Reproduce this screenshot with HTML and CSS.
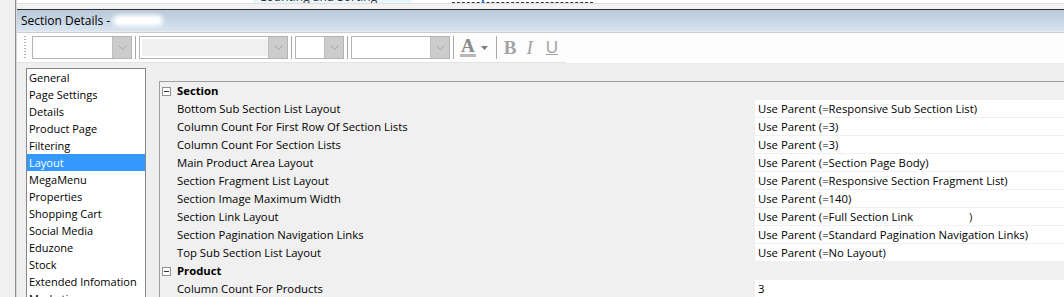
FILE: index.html
```html
<!DOCTYPE html>
<html>
<head>
  <title>Section Details</title>
  <link rel="stylesheet" href="styles.css">
</head>
<body>
  <div class="gutter"></div>
  <div class="main">
    <div class="behind">
      <div class="behind-tab"><span>Counting and Sorting</span></div>
      <div class="behind-dash"><span class="caret"></span></div>
    </div>
    <div class="behind-gap"></div>

    <div class="titlebar">
      <span>Section Details - </span><span class="redact title-redact"></span>
    </div>

    <div class="toolbar">
      <div class="strip">
        <span class="grip"></span>
        <div class="combo w100"><span class="drop"><svg width="9" height="5" viewBox="0 0 9 5"><polyline points="0.5,0.5 4.5,4.5 8.5,0.5" fill="none" stroke="#a6a6a6"/></svg></span></div>
        <span class="sep"></span>
        <div class="combo w149 disabled"><span class="drop"><svg width="9" height="5" viewBox="0 0 9 5"><polyline points="0.5,0.5 4.5,4.5 8.5,0.5" fill="none" stroke="#a6a6a6"/></svg></span></div>
        <span class="sep"></span>
        <div class="combo w49"><span class="drop"><svg width="9" height="5" viewBox="0 0 9 5"><polyline points="0.5,0.5 4.5,4.5 8.5,0.5" fill="none" stroke="#a6a6a6"/></svg></span></div>
        <span class="sep"></span>
        <div class="combo w99"><span class="drop"><svg width="9" height="5" viewBox="0 0 9 5"><polyline points="0.5,0.5 4.5,4.5 8.5,0.5" fill="none" stroke="#a6a6a6"/></svg></span></div>
        <span class="sep"></span>
        <span class="tool font-colour">A</span>
        <svg class="tri" width="7" height="4" viewBox="0 0 7 4"><polygon points="0,0 7,0 3.5,4" fill="#7a7a7a"/></svg>
        <span class="sep"></span>
        <span class="tool bold">B</span>
        <span class="tool italic">I</span>
        <span class="tool under">U</span>
      </div>
    </div>

    <div class="content">
      <ul class="pages">
        <li>General</li>
        <li>Page Settings</li>
        <li>Details</li>
        <li>Product Page</li>
        <li>Filtering</li>
        <li class="selected">Layout</li>
        <li>MegaMenu</li>
        <li>Properties</li>
        <li>Shopping Cart</li>
        <li>Social Media</li>
        <li>Eduzone</li>
        <li>Stock</li>
        <li>Extended Infomation</li>
        <li>Marketing</li>
      </ul>

      <div class="grid">
        <div class="cat"><span class="margin"><span class="toggle"></span></span><span class="cat-name">Section</span></div>
        <div class="row"><span class="margin"></span><span class="label">Bottom Sub Section List Layout</span><span class="value">Use Parent (=Responsive Sub Section List)</span></div>
        <div class="row"><span class="margin"></span><span class="label">Column Count For First Row Of Section Lists</span><span class="value">Use Parent (=3)</span></div>
        <div class="row"><span class="margin"></span><span class="label">Column Count For Section Lists</span><span class="value">Use Parent (=3)</span></div>
        <div class="row"><span class="margin"></span><span class="label">Main Product Area Layout</span><span class="value">Use Parent (=Section Page Body)</span></div>
        <div class="row"><span class="margin"></span><span class="label">Section Fragment List Layout</span><span class="value">Use Parent (=Responsive Section Fragment List)</span></div>
        <div class="row"><span class="margin"></span><span class="label">Section Image Maximum Width</span><span class="value">Use Parent (=140)</span></div>
        <div class="row"><span class="margin"></span><span class="label">Section Link Layout</span><span class="value">Use Parent (=Full Section Link<span class="redact value-redact"></span>)</span></div>
        <div class="row"><span class="margin"></span><span class="label">Section Pagination Navigation Links</span><span class="value">Use Parent (=Standard Pagination Navigation Links)</span></div>
        <div class="row"><span class="margin"></span><span class="label">Top Sub Section List Layout</span><span class="value">Use Parent (=No Layout)</span></div>
        <div class="cat"><span class="margin"><span class="toggle"></span></span><span class="cat-name">Product</span></div>
        <div class="row"><span class="margin"></span><span class="label">Column Count For Products</span><span class="value">3</span></div>
      </div>
    </div>
  </div>
</body>
</html>
```

FILE: styles.css
```css
html, body {
  margin: 0;
  padding: 0;
  height: 297px;
  overflow: hidden;
}
body {
  display: flex;
  font-family: "Open Sans", sans-serif;
  font-size: 11px;
  color: #000;
  background-color: #efefef;
}
.gutter {
  width: 15px;
  flex-shrink: 0;
  background-color: #f0f0f0;
  border-right: 1px solid #8c8c8c;
  box-shadow: 1px 0 0 #d8d8d8;
}
.main {
  flex: 1;
  margin-left: 1px;
  display: flex;
  flex-direction: column;
  min-width: 0;
}

/* window behind, mostly hidden */
.behind {
  height: 3px;
  display: flex;
  background-color: #fff;
  border-bottom: 1px solid #dedede;
  overflow: hidden;
}
.behind-tab {
  margin-left: 236px;
  width: 159px;
  background-color: #e9f6fb;
  line-height: 14px;
  color: #333;
}
.behind-tab span {
  display: block;
  margin-top: -10px;
  padding-left: 6px;
  font-size: 12px;
}
.behind-dash {
  margin-left: 40px;
  width: 141px;
  height: 2px;
  border-bottom: 1px dashed #333;
}
.caret {
  display: inline-block;
  margin-left: 30px;
  width: 2px;
  height: 3px;
  background-color: #3a6fd8;
  vertical-align: top;
}
.behind-gap {
  height: 5px;
  background-color: #f2f2f2;
}

.titlebar {
  height: 21px;
  border-top: 1px solid #2e2e2e;
  border-bottom: 1px solid #e9ecef;
  box-shadow: 0 1px 0 #cdcdcd;
  margin-bottom: 1px;
  background: linear-gradient(#b9c9da, #d8e4f0);
  padding-left: 4px;
  display: flex;
  align-items: center;
  font-size: 12px;
  color: #000;
}
.redact {
  display: inline-block;
  background-color: #fff;
  border-radius: 6px;
  filter: blur(2px);
}
.title-redact {
  width: 50px;
  height: 11px;
  margin-left: 3px;
}

.toolbar {
  height: 30px;
  background-color: #fdfdfd;
}
.strip {
  width: 549px;
  height: 29px;
  display: flex;
  align-items: center;
  border-bottom: 1px solid #e2e2e2;
}
.grip {
  width: 2px;
  height: 23px;
  margin-left: 7px;
  margin-right: 6px;
  background-image: linear-gradient(#b0b0b0 50%, transparent 50%);
  background-size: 2px 3px;
}
.combo {
  height: 21px;
  border: 1px solid #b4b4b4;
  background-color: #fff;
  display: flex;
  justify-content: flex-end;
  box-sizing: content-box;
}
.combo.disabled {
  background-color: #f0f0f0;
  box-shadow: inset 0 0 0 2px #fff;
}
.w100 { width: 98px; }
.w149 { width: 147px; }
.w49 { width: 47px; }
.w99 { width: 97px; }
.drop {
  width: 18px;
  background-color: #cccccc;
  border-left: 1px solid #bdbdbd;
  display: flex;
  align-items: center;
  justify-content: center;
}
.sep {
  width: 1px;
  height: 23px;
  margin: 0 3px;
  background-color: #a8a8a8;
  box-shadow: 1px 0 0 #fff;
}
.tool {
  font-family: "Liberation Serif", serif;
  font-size: 19px;
  color: #a3a3a3;
  line-height: 20px;
}
.font-colour {
  margin-left: 3px;
  font-weight: bold;
  color: #8a8a8a;
  border-bottom: 3px solid #b9b9b9;
  line-height: 16px;
  padding: 0 1px;
}
.tri {
  margin: 0 5px 0 5px;
}
.bold {
  margin-left: 4px;
  font-weight: bold;
}
.italic {
  margin-left: 10px;
  font-style: italic;
}
.under {
  margin-left: 13px;
  font-family: "Liberation Sans", sans-serif;
  font-size: 17px;
  text-decoration: underline;
}

.content {
  flex: 1;
  display: flex;
  align-items: flex-start;
  gap: 13px;
  padding: 5px 0 0 9px;
  overflow: hidden;
}
.pages {
  list-style: none;
  margin: 0;
  padding: 0;
  width: 118px;
  flex-shrink: 0;
  background-color: #fff;
  border: 1px solid #828790;
  height: 240px;
  overflow: hidden;
}
.pages li {
  height: 17px;
  line-height: 17px;
  padding-left: 2px;
  white-space: nowrap;
}
.pages li.selected {
  background-color: #3399ff;
  color: #fff;
}

.grid {
  flex: 1;
  margin-top: 13px;
  border-top: 1px solid #a0a0a0;
  border-left: 1px solid #a0a0a0;
  background-color: #f0f0f0;
  white-space: nowrap;
  font-size: 11.3px;
}
.row, .cat {
  display: flex;
  height: 18px;
}
.margin {
  width: 16px;
  flex-shrink: 0;
  display: flex;
  align-items: center;
}
.label {
  width: 578px;
  flex-shrink: 0;
  line-height: 17px;
  padding-left: 1px;
}
.value {
  flex: 1;
  height: 17px;
  line-height: 17px;
  background-color: #fff;
  border-bottom: 1px solid #f0f0f0;
  padding-left: 3px;
}
.cat-name {
  font-weight: bold;
  line-height: 17px;
  padding-left: 1px;
}
.toggle {
  position: relative;
  width: 7px;
  height: 7px;
  margin-left: 2px;
  border: 1px solid #919191;
  background-color: #fff;
}
.toggle:after {
  content: "";
  position: absolute;
  left: 1px;
  top: 3px;
  width: 5px;
  height: 1px;
  background-color: #333;
}
.value-redact {
  width: 50px;
  height: 12px;
  margin-left: 6px;
  vertical-align: middle;
}
```
